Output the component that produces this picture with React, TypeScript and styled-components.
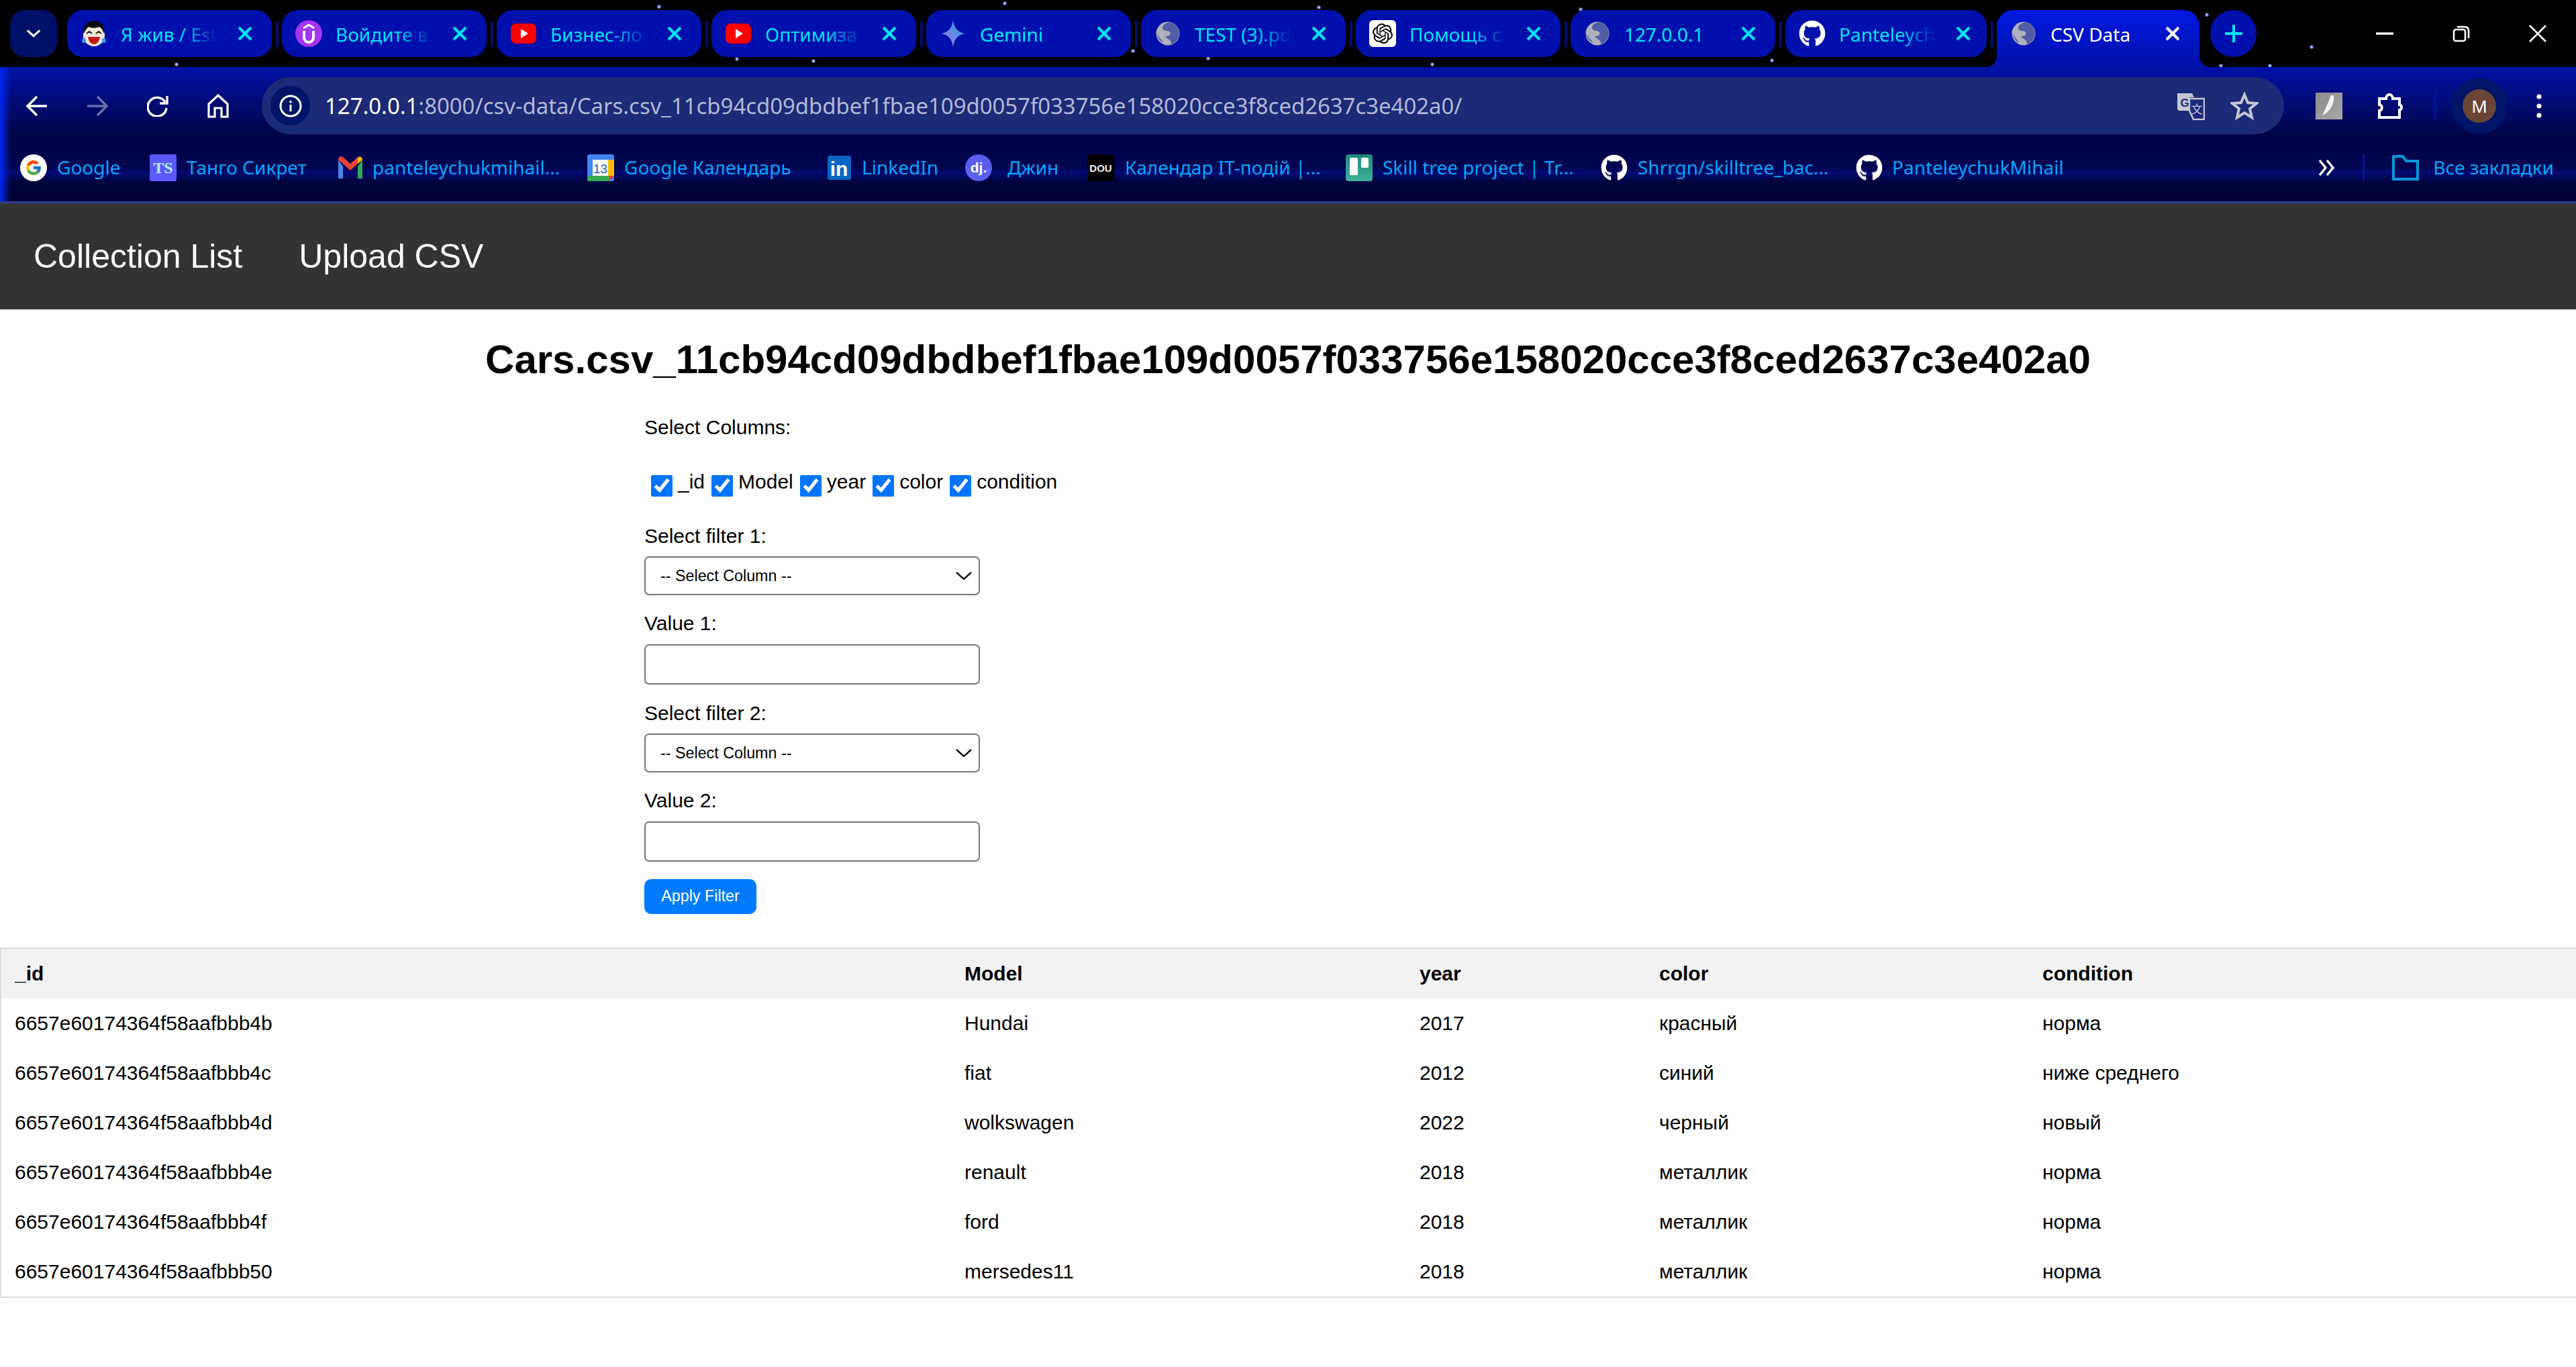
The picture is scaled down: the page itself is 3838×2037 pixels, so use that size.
import styled, { createGlobalStyle } from 'styled-components';
import { FcGoogle } from 'react-icons/fc';
import { FaGithub } from 'react-icons/fa';
import { SiOpenai } from 'react-icons/si';

const GlobalStyle = createGlobalStyle`
  html, body {
    margin: 0;
    background: #fff;
    font-family: "Liberation Sans", Arial, sans-serif;
    color: #000;
  }
`;

const stars: [number, number][] = [
  [263, 96], [1497, 5], [1965, 11], [2355, 14], [2134, 96], [1800, 87], [1688, 76],
  [3444, 70], [982, 10], [1098, 88], [1212, 91], [2640, 90], [3309, 98], [3382, 98], [3288, 22],
];

const starfield = stars
  .map(([x, y]) => `radial-gradient(circle at ${x}px ${y}px, #c8d4ff 0, #8aa0ff 1.5px, transparent 3.5px)`)
  .join(', ');

const TabStrip = styled.div`
  height: 100px;
  box-sizing: border-box;
  padding: 15px 0 0 15px;
  display: flex;
  align-items: flex-start;
  gap: 15px;
  background-color: #000;
  background-image: ${starfield};
  font-family: "Noto Sans", sans-serif;
`;

const TabSearch = styled.div`
  width: 70px;
  height: 70px;
  border-radius: 22px;
  background: #001068;
  display: flex;
  align-items: center;
  justify-content: center;
`;

const Tab = styled.div<{ $active?: boolean; $last?: boolean }>`
  position: relative;
  flex: none;
  width: ${p => (p.$active ? '302px' : p.$last ? '300px' : '305px')};
  height: ${p => (p.$active ? '85px' : '70px')};
  box-sizing: border-box;
  padding: ${p => (p.$active ? '0 0 15px 0' : '0')};
  border-radius: ${p => (p.$active ? '24px 24px 0 0' : '24px')};
  background: ${p => (p.$active ? 'linear-gradient(180deg, #0018e2 0%, #0012a8 100%)' : '#0010ac')};
  display: flex;
  align-items: center;

  &::before {
    content: '';
    position: absolute;
    display: ${p => (p.$active ? 'block' : 'none')};
    left: -16px;
    bottom: 0;
    width: 16px;
    height: 16px;
    background: radial-gradient(circle at 0 0, transparent 15.5px, #0012a8 16px);
  }

  &::after {
    content: '';
    position: absolute;
    display: ${p => (p.$active ? 'block' : 'none')};
    right: -16px;
    bottom: 0;
    width: 16px;
    height: 16px;
    background: radial-gradient(circle at 100% 0, transparent 15.5px, #0012a8 16px);
  }
`;

const TabDivider = styled.span`
  position: absolute;
  right: -10px;
  top: 16px;
  width: 4px;
  height: 40px;
  border-radius: 2px;
  background: #000f6a;
`;

const TabIcon = styled.span`
  position: absolute;
  left: 20px;
  top: 15px;
  width: 40px;
  height: 40px;
  display: flex;
`;

const TabTitle = styled.span<{ $active?: boolean; $fade?: boolean }>`
  margin-left: 80px;
  margin-top: 1px;
  width: 165px;
  white-space: nowrap;
  font-size: 28px;
  line-height: 40px;
  color: ${p => (p.$active ? '#fff' : '#00e6ff')};
  mask-image: ${p => (p.$fade ? 'linear-gradient(90deg, #000 55%, transparent 87%)' : 'none')};
`;

const TabClose = styled.span<{ $active?: boolean }>`
  position: absolute;
  left: ${p => (p.$active ? '251px' : '254px')};
  top: 24px;
  width: 22px;
  height: 22px;
  display: flex;
  color: ${p => (p.$active ? '#fff' : '#00e6ff')};
`;

const NewTab = styled.div`
  width: 69px;
  height: 70px;
  margin-left: 1px;
  border-radius: 50%;
  background: #0010ac;
  display: flex;
  align-items: center;
  justify-content: center;
`;

const WindowControls = styled.div`
  margin-left: auto;
  margin-top: -15px;
  height: 100px;
  display: flex;
  align-items: center;
`;

const WindowButton = styled.div`
  width: 114px;
  height: 98px;
  display: flex;
  align-items: center;
  justify-content: center;
  color: #fff;
`;

const ThemeBand = styled.div`
  height: 200px;
  background:
    linear-gradient(90deg, #0026f0 0, rgba(0, 30, 230, 0) 16px),
    linear-gradient(180deg, #0012a8 0%, #000448 50%, #000450 75%, #000a72 79%, #00033f 85%, #000130 100%);
  font-family: "Noto Sans", sans-serif;
`;

const Toolbar = styled.div`
  height: 115px;
  box-sizing: border-box;
  padding: 15px 10px 15px 10px;
  display: flex;
  align-items: center;
`;

const ToolButton = styled.div<{ $dim?: boolean }>`
  flex: none;
  width: 90px;
  height: 85px;
  display: flex;
  align-items: center;
  justify-content: center;
  color: ${p => (p.$dim ? '#6a6fa8' : '#fff')};
`;

const AddressBar = styled.div`
  flex: 1;
  height: 85px;
  margin: 0 22px 0 20px;
  border-radius: 43px;
  background: #1c2a78;
  display: flex;
  align-items: center;
  padding-left: 13px;
`;

const SiteInfo = styled.div`
  flex: none;
  width: 59px;
  height: 59px;
  border-radius: 50%;
  background: #001468;
  display: flex;
  align-items: center;
  justify-content: center;
  color: #fff;
`;

const Url = styled.div`
  margin-left: 22px;
  font-size: 32.9px;
  white-space: nowrap;
  color: #b3b8d6;

  b {
    font-weight: 400;
    color: #fff;
  }
`;

const AddressActions = styled.div`
  margin-left: auto;
  margin-right: 38px;
  display: flex;
  align-items: center;
  gap: 38px;
  color: #c4c6d4;
`;

const ToolbarDivider = styled.span`
  flex: none;
  width: 4px;
  height: 40px;
  margin: 0 20px 0 21px;
  background: #0012a0;
`;

const AvatarRing = styled.div`
  flex: none;
  width: 84px;
  height: 84px;
  margin: 0 2px;
  border-radius: 50%;
  background: #001468;
  display: flex;
  align-items: center;
  justify-content: center;
`;

const Avatar = styled.div`
  width: 50px;
  height: 50px;
  border-radius: 50%;
  background: #6b4535;
  color: #fff;
  font-size: 26px;
  line-height: 50px;
  text-align: center;
`;

const BookmarksBar = styled.div`
  height: 85px;
  box-sizing: border-box;
  padding: 15px 33px 30px 30px;
  display: flex;
  align-items: center;
`;

const Bookmark = styled.div<{ $w: number; $gap?: number }>`
  flex: none;
  width: ${p => p.$w}px;
  display: flex;
  align-items: center;
  gap: ${p => p.$gap ?? 15}px;
`;

const BookmarkIcon = styled.span`
  flex: none;
  width: 40px;
  height: 40px;
  display: flex;
`;

const BookmarkText = styled.span`
  margin-top: -2px;
  font-size: 28px;
  line-height: 40px;
  white-space: nowrap;
  color: #00a8ff;
`;

const BookmarkTail = styled.div`
  margin-left: auto;
  display: flex;
  align-items: center;
  gap: 20px;
  color: #00a8ff;
`;

const MoreBookmarks = styled.span`
  display: flex;
  margin-right: 21px;
  color: #fff;
`;

const BookmarkDivider = styled.span`
  width: 3px;
  height: 40px;
  margin-right: 20px;
  background: #0012a0;
`;

const SiteNav = styled.nav`
  background: #333;
  border-top: 3px solid #2c3d90;
  padding: 50px;
  display: flex;
  gap: 84px;
`;

const NavLink = styled.a`
  font-size: 50px;
  line-height: 58px;
  color: #fff;
`;

const Heading = styled.h1`
  margin: 40px 0 50px;
  font-size: 60px;
  line-height: 69px;
  font-weight: 700;
  text-align: center;
`;

const FilterForm = styled.form`
  width: 1918px;
  margin: 0 auto 50px;
  font-size: 30px;
  line-height: 34px;
`;

const FieldLabel = styled.label`
  display: block;
  margin-bottom: 13.5px;
`;

const ColumnsRow = styled.div`
  margin: 46.5px 0 42px;
  padding-left: 10px;
  display: flex;
  gap: 10px;
`;

const ColumnOption = styled.label`
  display: flex;
  align-items: flex-start;
  gap: 8px;
`;

const ColumnCheck = styled.input`
  width: 32px;
  height: 32px;
  margin: 7px 0 0;
  accent-color: #0075ff;
`;

const SelectWrap = styled.div`
  position: relative;
  width: 500px;
  margin-bottom: 25px;
`;

const ColumnSelect = styled.select`
  display: block;
  width: 100%;
  height: 58px;
  box-sizing: border-box;
  appearance: none;
  padding: 0 0 0 22px;
  border: 2px solid #767676;
  border-radius: 7px;
  background: #fff;
  color: #000;
  font: 23.3px "Liberation Sans", Arial, sans-serif;
`;

const SelectArrow = styled.svg`
  position: absolute;
  right: 12px;
  top: 22px;
  pointer-events: none;
`;

const ValueInput = styled.input`
  display: block;
  width: 500px;
  height: 60px;
  box-sizing: border-box;
  margin-bottom: 26px;
  border: 2px solid #767676;
  border-radius: 7px;
  background: #fff;
`;

const ApplyButton = styled.button`
  display: block;
  width: 167px;
  height: 52px;
  padding: 0;
  border: 0;
  border-radius: 10px;
  background: #007bff;
  color: #fff;
  font: 23.3px "Liberation Sans", Arial, sans-serif;
`;

const DataTable = styled.table`
  width: 100%;
  table-layout: fixed;
  border-collapse: separate;
  border-spacing: 0;
  border: 2px solid #ddd;
  font-size: 30px;
  line-height: 34px;
`;

const Col = styled.col<{ $w: number }>`
  width: ${p => p.$w}px;
`;

const HeadCell = styled.th`
  padding: 20px;
  background: #f2f2f2;
  font-weight: 700;
  text-align: left;
`;

const Cell = styled.td`
  padding: 20px;
`;

const Globe = () => (
  <svg viewBox="0 0 40 40" width="40" height="40">
    <circle cx="20" cy="20" r="17.5" fill="#b0b0bc" />
    <path d="M22 3c-8 2-12 7-9 11 3 3 8 1 10 4 2 4-2 6-7 6 2 4 7 4 9 9 1 2-1 3-3 4 8-1 15-9 15-17C37 11 31 4 22 3z" fill="#2a3c9c" opacity="0.7" />
    <path d="M3 20c1 6 5 11 10 14-1-5-7-8-10-14z" fill="#2a3c9c" opacity="0.6" />
  </svg>
);

const LaughFace = () => (
  <svg viewBox="0 0 40 40" width="40" height="40">
    <circle cx="20" cy="23" r="16" fill="#f6e6d8" />
    <path d="M5 20C3 6 12 1 20 1s17 5 15 19c-2-6-5-9-7-10-5 2-12 2-16 0-3 2-5 5-7 10z" fill="#0a0a0a" />
    <path d="M9 20l4-3 4 3M23 20l4-3 4 3" fill="none" stroke="#222" strokeWidth="2" />
    <path d="M11 25h18c-1 7-5 11-9 11s-8-4-9-11z" fill="#c4161c" />
    <path d="M4 27c-3 3-2 7 1 7s4-4 2-7zM36 27c3 3 2 7-1 7s-4-4-2-7z" fill="#3d9be8" />
  </svg>
);

const PurpleU = () => (
  <svg viewBox="0 0 40 40" width="40" height="40">
    <circle cx="20" cy="20" r="20" fill="#a435f0" />
    <path d="M12 12l8-5 8 5" fill="none" stroke="#fff" strokeWidth="3" />
    <path d="M13 16v9c0 5 3 8 7 8s7-3 7-8v-9" fill="none" stroke="#fff" strokeWidth="4" />
  </svg>
);

const YouTube = () => (
  <svg viewBox="0 0 40 40" width="40" height="40">
    <rect x="1" y="5" width="38" height="30" rx="8" fill="#f00" />
    <path d="M16 13l11 7-11 7z" fill="#fff" />
  </svg>
);

const GeminiStar = () => (
  <svg viewBox="0 0 40 40" width="40" height="40">
    <defs>
      <linearGradient id="gem" x1="0" y1="1" x2="1" y2="0">
        <stop offset="0" stopColor="#c06cc8" />
        <stop offset="0.6" stopColor="#4f8fe8" />
        <stop offset="1" stopColor="#3a7be0" />
      </linearGradient>
    </defs>
    <path d="M20 0c2 12 6 17 17 20-11 3-15 8-17 20-2-12-6-17-17-20 11-3 15-8 17-20z" fill="url(#gem)" />
  </svg>
);

const OpenAiIcon = () => (
  <svg viewBox="0 0 40 40" width="40" height="40">
    <rect width="40" height="40" rx="6" fill="#fff" />
    <foreignObject x="5" y="5" width="30" height="30">
      <SiOpenai size={30} color="#000" />
    </foreignObject>
  </svg>
);

const GitHubIcon = () => <FaGithub size={40} color="#fff" />;

const CloseGlyph = () => (
  <svg viewBox="0 0 22 22" width="22" height="22">
    <path d="M2 2l18 18M20 2L2 20" stroke="currentColor" strokeWidth="4" fill="none" />
  </svg>
);

const GoogleIcon = () => (
  <svg viewBox="0 0 40 40" width="40" height="40">
    <circle cx="20" cy="20" r="20" fill="#fff" />
    <foreignObject x="7" y="7" width="26" height="26">
      <FcGoogle size={26} />
    </foreignObject>
  </svg>
);

const TangoIcon = () => (
  <svg viewBox="0 0 40 40" width="40" height="40">
    <rect width="40" height="40" rx="3" fill="#5a5aff" />
    <text x="20" y="28" textAnchor="middle" fontFamily="'Liberation Serif', serif" fontWeight="700" fontSize="24" fill="#b8f0ff">TS</text>
  </svg>
);

const GmailIcon = () => (
  <svg viewBox="0 0 40 40" width="40" height="40">
    <path d="M2 8v28h7V18z" fill="#4a86e8" />
    <path d="M31 18v18h7V8z" fill="#34a853" />
    <path d="M2 8c0-5 5-6 8-3l10 9 10-9c3-3 8-2 8 3L20 24z" fill="#ea4335" />
    <path d="M31 5c3-2 7-1 7 3l-7 6z" fill="#fbbc04" />
  </svg>
);

const CalendarIcon = () => (
  <svg viewBox="0 0 40 40" width="40" height="40">
    <rect width="40" height="40" rx="3" fill="#4285f4" />
    <rect x="31" y="8" width="9" height="24" fill="#fbbc04" />
    <rect y="32" width="34" height="8" fill="#34a853" />
    <path d="M32 40l8-8h-8z" fill="#ea4335" />
    <rect x="8" y="8" width="23" height="24" fill="#fff" />
    <text x="19.5" y="28" textAnchor="middle" fontFamily="'Liberation Sans', sans-serif" fontSize="19" fill="#1a56c4">13</text>
  </svg>
);

const LinkedInIcon = () => (
  <svg viewBox="0 0 40 40" width="40" height="40">
    <rect y="2" width="35" height="36" rx="3" fill="#0a66c2" />
    <text x="17" y="32" textAnchor="middle" fontFamily="'Liberation Sans', sans-serif" fontWeight="700" fontSize="30" fill="#fff">in</text>
  </svg>
);

const DjinniIcon = () => (
  <svg viewBox="0 0 40 40" width="40" height="40">
    <circle cx="20" cy="20" r="20" fill="#5a5ff0" />
    <text x="20" y="27" textAnchor="middle" fontFamily="'Liberation Sans', sans-serif" fontWeight="700" fontSize="21" fill="#fff">dj.</text>
  </svg>
);

const DouIcon = () => (
  <svg viewBox="0 0 40 40" width="40" height="40">
    <rect width="40" height="40" fill="#000" />
    <text x="20" y="26" textAnchor="middle" fontFamily="'Liberation Sans', sans-serif" fontWeight="700" fontSize="15" fill="#eee">DOU</text>
  </svg>
);

const TrelloIcon = () => (
  <svg viewBox="0 0 40 40" width="40" height="40">
    <defs>
      <linearGradient id="trl" x1="0" y1="0" x2="0" y2="1">
        <stop offset="0" stopColor="#1c8a78" />
        <stop offset="1" stopColor="#3fb09a" />
      </linearGradient>
    </defs>
    <rect width="40" height="40" rx="4" fill="url(#trl)" />
    <rect x="6" y="5" width="12" height="26" rx="2" fill="#fff" />
    <rect x="23" y="5" width="11" height="15" rx="2" fill="#fff" />
  </svg>
);

const tabs = [
  { title: 'Я жив / Est', icon: <LaughFace />, fade: true },
  { title: 'Войдите в', icon: <PurpleU />, fade: true },
  { title: 'Бизнес-ло', icon: <YouTube />, fade: true },
  { title: 'Оптимиза', icon: <YouTube />, fade: true },
  { title: 'Gemini', icon: <GeminiStar /> },
  { title: 'TEST (3).pd', icon: <Globe />, fade: true },
  { title: 'Помощь с', icon: <OpenAiIcon />, fade: true },
  { title: '127.0.0.1', icon: <Globe /> },
  { title: 'Panteleych', icon: <GitHubIcon />, fade: true },
];

const bookmarks = [
  { label: 'Google', icon: <GoogleIcon />, w: 193 },
  { label: 'Танго Сикрет', icon: <TangoIcon />, w: 279 },
  { label: 'panteleychukmihail...', icon: <GmailIcon />, w: 373, gap: 13 },
  { label: 'Google Календарь', icon: <CalendarIcon />, w: 358 },
  { label: 'LinkedIn', icon: <LinkedInIcon />, w: 205, gap: 11 },
  { label: 'Джин', icon: <DjinniIcon />, w: 182, gap: 23 },
  { label: 'Календар IT-подій |...', icon: <DouIcon />, w: 385, gap: 16 },
  { label: 'Skill tree project | Tr...', icon: <TrelloIcon />, w: 380 },
  { label: 'Shrrgn/skilltree_bac...', icon: <GitHubIcon />, w: 380 },
  { label: 'PanteleychukMihail', icon: <GitHubIcon />, w: 320, gap: 14 },
];

const columns = ['_id', 'Model', 'year', 'color', 'condition'];
const colWidths = [1415, 678, 357, 571, 815];

const rows = [
  ['6657e60174364f58aafbbb4b', 'Hundai', '2017', 'красный', 'норма'],
  ['6657e60174364f58aafbbb4c', 'fiat', '2012', 'синий', 'ниже среднего'],
  ['6657e60174364f58aafbbb4d', 'wolkswagen', '2022', 'черный', 'новый'],
  ['6657e60174364f58aafbbb4e', 'renault', '2018', 'металлик', 'норма'],
  ['6657e60174364f58aafbbb4f', 'ford', '2018', 'металлик', 'норма'],
  ['6657e60174364f58aafbbb50', 'mersedes11', '2018', 'металлик', 'норма'],
];

function FilterSelect() {
  return (
    <SelectWrap>
      <ColumnSelect>
        <option>-- Select Column --</option>
      </ColumnSelect>
      <SelectArrow viewBox="0 0 24 14" width="24" height="14">
        <path d="M1 2l11 10L23 2" fill="none" stroke="#111" strokeWidth="2.4" />
      </SelectArrow>
    </SelectWrap>
  );
}

export default function App() {
  return (
    <>
      <GlobalStyle />
      <TabStrip>
        <TabSearch>
          <svg viewBox="0 0 24 14" width="22" height="14">
            <path d="M2 2l10 9 10-9" fill="none" stroke="#fff" strokeWidth="3.4" />
          </svg>
        </TabSearch>
        {tabs.map((tab, i) => (
          <Tab key={i} $last={i === tabs.length - 1}>
            <TabIcon>{tab.icon}</TabIcon>
            <TabTitle $fade={tab.fade}>{tab.title}</TabTitle>
            <TabClose>
              <CloseGlyph />
            </TabClose>
            <TabDivider />
          </Tab>
        ))}
        <Tab $active>
          <TabIcon>
            <Globe />
          </TabIcon>
          <TabTitle $active>CSV Data</TabTitle>
          <TabClose $active>
            <CloseGlyph />
          </TabClose>
        </Tab>
        <NewTab>
          <svg viewBox="0 0 28 28" width="28" height="28">
            <path d="M14 1v26M1 14h26" stroke="#00e6ff" strokeWidth="4" fill="none" />
          </svg>
        </NewTab>
        <WindowControls>
          <WindowButton>
            <svg viewBox="0 0 26 4" width="26" height="4">
              <path d="M0 2h26" stroke="currentColor" strokeWidth="3.4" />
            </svg>
          </WindowButton>
          <WindowButton>
            <svg viewBox="0 0 26 26" width="26" height="26" fill="none" stroke="currentColor" strokeWidth="2.6">
              <rect x="2" y="7" width="17" height="17" rx="3" />
              <path d="M7 3h11c4 0 6 2 6 6v11" />
            </svg>
          </WindowButton>
          <WindowButton>
            <svg viewBox="0 0 26 26" width="26" height="26">
              <path d="M1 1l24 24M25 1L1 25" stroke="currentColor" strokeWidth="2.6" fill="none" />
            </svg>
          </WindowButton>
        </WindowControls>
      </TabStrip>

      <ThemeBand>
        <Toolbar>
          <ToolButton>
            <svg viewBox="0 0 32 32" width="32" height="32" fill="none" stroke="currentColor" strokeWidth="3.4">
              <path d="M31 16H3M16 2L2 16l14 14" />
            </svg>
          </ToolButton>
          <ToolButton $dim>
            <svg viewBox="0 0 32 32" width="32" height="32" fill="none" stroke="currentColor" strokeWidth="3.4">
              <path d="M1 16h28M16 2l14 14-14 14" />
            </svg>
          </ToolButton>
          <ToolButton>
            <svg viewBox="0 0 32 32" width="32" height="32" fill="none" stroke="currentColor" strokeWidth="3.4">
              <path d="M27 10a14 14 0 1 0 2 9" />
              <path d="M30 1v11H19" />
            </svg>
          </ToolButton>
          <ToolButton>
            <svg viewBox="0 0 32 36" width="32" height="36" fill="none" stroke="currentColor" strokeWidth="3.2">
              <path d="M2 15L16 2l14 13v19h-9V21H11v13H2z" />
            </svg>
          </ToolButton>
          <AddressBar>
            <SiteInfo>
              <svg viewBox="0 0 34 34" width="34" height="34" fill="none" stroke="currentColor" strokeWidth="3">
                <circle cx="17" cy="17" r="15" />
                <path d="M17 15v10M17 9v3.4" />
              </svg>
            </SiteInfo>
            <Url>
              <b>127.0.0.1</b>:8000/csv-data/Cars.csv_11cb94cd09dbdbef1fbae109d0057f033756e158020cce3f8ced2637c3e402a0/
            </Url>
            <AddressActions>
              <svg viewBox="0 0 42 42" width="42" height="42">
                <path d="M1 2h22l3 6h-7v20H5a4 4 0 0 1-4-4z" fill="#c4c6d4" />
                <text x="12" y="22" textAnchor="middle" fontFamily="'Liberation Sans', sans-serif" fontWeight="700" fontSize="17" fill="#1c2a78">G</text>
                <path d="M19 10h22v31H25l-6-13z" fill="#1c2a78" stroke="#c4c6d4" strokeWidth="2.4" />
                <text x="30" y="32" textAnchor="middle" fontFamily="'Noto Sans CJK SC', sans-serif" fontSize="17" fill="#c4c6d4">文</text>
              </svg>
              <svg viewBox="0 0 42 42" width="42" height="42" fill="none" stroke="currentColor" strokeWidth="4">
                <path d="M21 4l5 12 13 1-10 8 3 13-11-7-11 7 3-13-10-8 13-1z" />
              </svg>
            </AddressActions>
          </AddressBar>
          <ToolButton>
            <svg viewBox="0 0 40 40" width="40" height="40">
              <defs>
                <linearGradient id="ext" x1="0" y1="0" x2="1" y2="1">
                  <stop offset="0" stopColor="#8c8c8c" />
                  <stop offset="1" stopColor="#a8a8a8" />
                </linearGradient>
              </defs>
              <rect width="40" height="40" fill="url(#ext)" />
              <path d="M27 4c2 10-4 24-17 30 5-10 9-20 13-30z" fill="#f4f4f4" />
            </svg>
          </ToolButton>
          <ToolButton>
            <svg viewBox="0 0 40 40" width="40" height="40" fill="none" stroke="currentColor" strokeWidth="4">
              <path d="M5 9h10c0-8 10-8 10 0h10v9c4 0 4 8 0 8v11H5V27c5 0 5-9 0-9z" />
            </svg>
          </ToolButton>
          <ToolbarDivider />
          <AvatarRing>
            <Avatar>M</Avatar>
          </AvatarRing>
          <ToolButton>
            <svg viewBox="0 0 8 36" width="8" height="36" fill="currentColor">
              <circle cx="4" cy="4" r="3.6" />
              <circle cx="4" cy="18" r="3.6" />
              <circle cx="4" cy="32" r="3.6" />
            </svg>
          </ToolButton>
        </Toolbar>
        <BookmarksBar>
          {bookmarks.map((bm, i) => (
            <Bookmark key={i} $w={bm.w} $gap={bm.gap}>
              <BookmarkIcon>{bm.icon}</BookmarkIcon>
              <BookmarkText>{bm.label}</BookmarkText>
            </Bookmark>
          ))}
          <BookmarkTail>
            <MoreBookmarks>
              <svg viewBox="0 0 26 26" width="26" height="26" fill="none" stroke="currentColor" strokeWidth="3.4">
                <path d="M3 2l9 11-9 11M14 2l9 11-9 11" />
              </svg>
            </MoreBookmarks>
            <BookmarkDivider />
            <svg viewBox="0 0 42 42" width="42" height="42" fill="none" stroke="#0a98dc" strokeWidth="4">
              <path d="M3 4h14l5 7h17v27H3z" />
            </svg>
            <BookmarkText>Все закладки</BookmarkText>
          </BookmarkTail>
        </BookmarksBar>
      </ThemeBand>

      <SiteNav>
        <NavLink>Collection List</NavLink>
        <NavLink>Upload CSV</NavLink>
      </SiteNav>

      <Heading>Cars.csv_11cb94cd09dbdbef1fbae109d0057f033756e158020cce3f8ced2637c3e402a0</Heading>

      <FilterForm>
        <FieldLabel as="div">Select Columns:</FieldLabel>
        <ColumnsRow>
          {columns.map(name => (
            <ColumnOption key={name}>
              <ColumnCheck type="checkbox" defaultChecked />
              {name}
            </ColumnOption>
          ))}
        </ColumnsRow>
        <FieldLabel>Select filter 1:</FieldLabel>
        <FilterSelect />
        <FieldLabel>Value 1:</FieldLabel>
        <ValueInput type="text" />
        <FieldLabel>Select filter 2:</FieldLabel>
        <FilterSelect />
        <FieldLabel>Value 2:</FieldLabel>
        <ValueInput type="text" />
        <ApplyButton type="button">Apply Filter</ApplyButton>
      </FilterForm>

      <DataTable>
        <colgroup>
          {colWidths.map((w, i) => (
            <Col key={i} $w={w} />
          ))}
        </colgroup>
        <thead>
          <tr>
            {columns.map(name => (
              <HeadCell key={name}>{name}</HeadCell>
            ))}
          </tr>
        </thead>
        <tbody>
          {rows.map(row => (
            <tr key={row[0]}>
              {row.map((value, i) => (
                <Cell key={i}>{value}</Cell>
              ))}
            </tr>
          ))}
        </tbody>
      </DataTable>
    </>
  );
}
